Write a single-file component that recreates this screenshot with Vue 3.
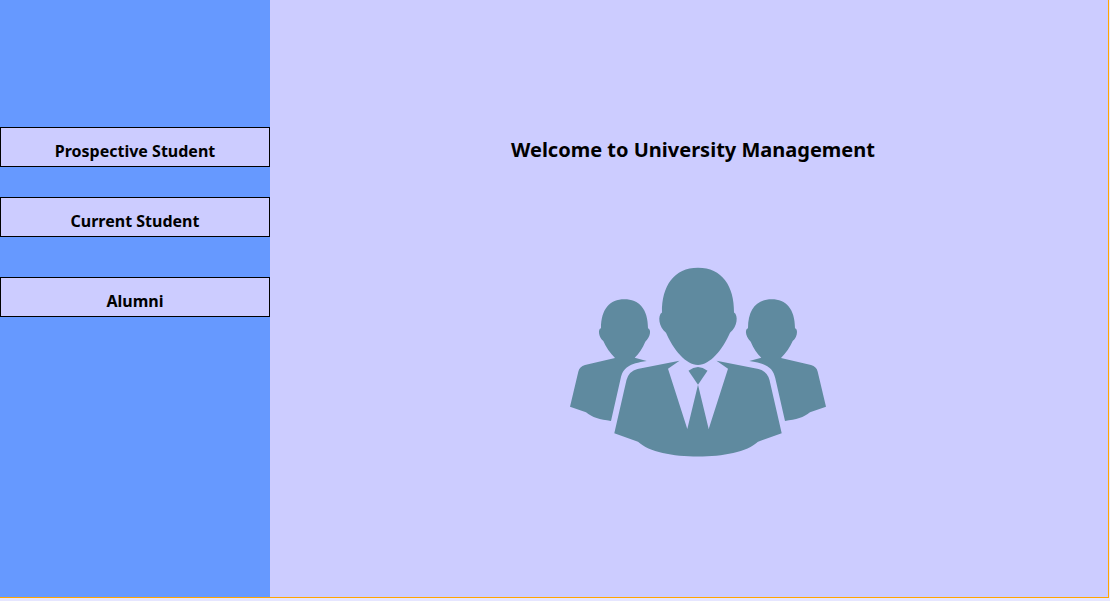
<script setup>
const items = [
  { label: 'Prospective Student' },
  { label: 'Current Student' },
  { label: 'Alumni', spaced: true },
]
</script>

<template>
  <div class="window">
    <div class="frame">
      <nav class="sidebar">
        <button v-for="item in items" :key="item.label" type="button" class="nav-button" :class="{ spaced: item.spaced }">
          {{ item.label }}
        </button>
      </nav>
      <main class="content">
        <h1 class="title">Welcome to University Management</h1>
        <div class="picture">
          <svg class="people" viewBox="0 0 256 190" role="img" aria-label="People">
            <defs>
              <path id="side" d="M54.3 32.3C40 32.3 31 42 31 61.3C27.500 62 28.800 71 33.300 74C36 80 40 86 45 91L15 98Q9.500 99.500 8.300 104.700L0 139.700L16 145.300C22 150.500 30 152.500 41 154L50.700 111.300C53 101 59 96.500 76.700 94L64.700 90.800C69 87 72.500 81 75.300 74.700C80.500 70 81.500 62.500 78 61.300C78 42 69 32.300 54.300 32.300Z" />
            </defs>
            <use href="#side" />
            <use href="#side" transform="matrix(-1 0 0 1 256 0)" />
            <path d="M128 .7C104 .7 91.700 19 92 45.500C87.500 48 88.500 60 96 65.700C103 82 116 98 128 98C140 98 153 82 160 65.700C167.500 60 168.500 48 164 45.500C164.300 19 152 .7 128 .7Z" />
            <path d="M44.300 166.300L56.500 113Q59 104 67.500 102L109.500 93.800L98 101.700L117.300 162L128 117.700L138.700 162L158 101.700L146.500 93.800L188.500 102Q197 104 199.500 113L211.700 166.300L188 174.700C177 185 153 189.500 128 189.500C103 189.500 79 185 68 174.700Z" />
            <path d="M118.500 103.700Q128 96.500 137.500 103.700L128 117.700Z" />
          </svg>
        </div>
      </main>
    </div>
  </div>
</template>

<style>
body {
  margin: 0;
}
</style>

<style scoped>
.window {
  box-sizing: border-box;
  display: flex;
  min-height: 100vh;
  padding: 0 1px 3px 0;
  background: #e6e6ff;
  font-family: Tahoma, "Noto Sans", sans-serif;
  color: #000;
}

.frame {
  display: flex;
  flex: 1;
  border: solid #ffa500;
  border-width: 0 1px 1px 0;
  background: #ccccff;
}

.sidebar {
  box-sizing: border-box;
  display: flex;
  flex-direction: column;
  gap: 30px;
  width: 270px;
  padding-top: 127px;
  background: #6699ff;
}

.nav-button {
  box-sizing: border-box;
  height: 40px;
  padding: 8px 0 0;
  border: 1px solid #000;
  border-radius: 0;
  background: #ccccff;
  color: inherit;
  font: bold 16px/24px Tahoma, "Noto Sans", sans-serif;
  text-align: center;
}

.spaced {
  margin-top: 10px;
}

.content {
  display: flex;
  flex: 1;
  flex-direction: column;
  align-items: center;
  padding: 134px 0 0 8px;
}

.title {
  margin: 0;
  font-size: 20px;
  line-height: 32px;
}

.picture {
  padding: 101px 0 0 10px;
}

.people {
  display: block;
  width: 256px;
  fill: #5f8a9f;
}
</style>
